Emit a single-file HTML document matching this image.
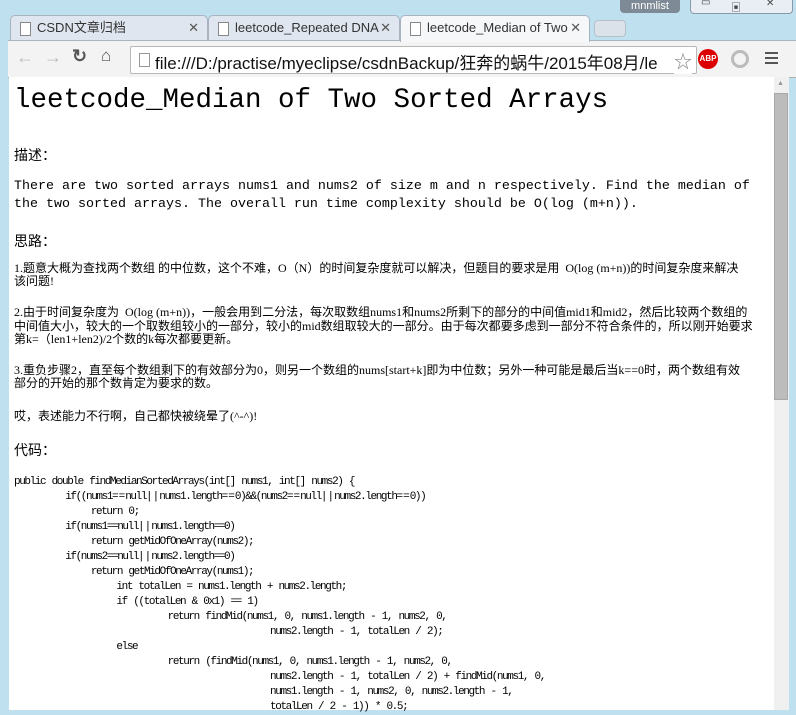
<!DOCTYPE html>
<html><head><meta charset="utf-8"><style>
body{margin:0;width:796px;height:710px;overflow:hidden;background:#bfe0ef;position:relative;font-family:"Liberation Sans","Noto Sans CJK SC",sans-serif}
.abs{position:absolute;white-space:pre}
.tab{position:absolute;top:15px;height:26px;background:#dfe6ef;border:1px solid #a9b3c0;border-bottom:none;border-radius:5px 5px 0 0;font-size:13px;color:#333;line-height:24px;padding-left:26px;box-sizing:border-box;overflow:hidden}
.tab .ic{position:absolute;left:9px;top:6px;width:9px;height:12px;border:1px solid #888;background:#fff}
.tab .x{position:absolute;right:8px;top:0;font-size:13px;color:#555}
.toolbar{position:absolute;left:8px;top:40px;width:788px;height:36px;background:#f3f3f3;border-top:1px solid #a9b3c0;border-bottom:1px solid #b0b0b0}
.content{position:absolute;left:9px;top:77px;width:765px;height:633px;background:#fff}
.mono{font-family:"Liberation Mono","Noto Sans CJK SC",monospace}
.cn{font-family:"Liberation Serif","Noto Sans CJK SC",serif;font-size:12px;color:#000}
.code{font-family:"Liberation Mono",monospace;font-size:11px;letter-spacing:-1.4px;word-spacing:1.2px;line-height:15px;color:#000}
.code i{font-style:normal;letter-spacing:0}
</style></head><body>
<div class="tab" style="left:10px;width:198px">CSDN文章归档<span class="ic"></span><span class="x">✕</span></div>
<div class="tab" style="left:208px;width:192px">leetcode_Repeated DNA<span class="ic"></span><span class="x">✕</span></div>
<div class="tab" style="left:400px;width:190px;background:#f6f7f9;height:27px;z-index:2">leetcode_Median of Two<span class="ic"></span><span class="x">✕</span></div>
<div style="position:absolute;left:594px;top:20px;width:30px;height:15px;background:#dbe2ea;border:1px solid #b6c0cc;border-radius:4px"></div>
<div style="position:absolute;left:620px;top:0;width:60px;height:13px;background:#7e8a95;border-radius:0 0 4px 4px;color:#fff;font-size:11px;text-align:center;line-height:12px">mnmlist</div>
<div style="position:absolute;left:690px;top:0;width:101px;height:13px;background:#e8eef4;border:1px solid #8a99aa;border-top:none;border-radius:0 0 4px 4px;font-size:10px;color:#444"><span style="position:absolute;left:10px;top:-3px">▭</span><span style="position:absolute;left:40px;top:-1px">▣</span><span style="position:absolute;left:75px;top:-2px">✕</span></div>
<div class="toolbar">
 <span class="abs" style="left:8px;top:6px;font-size:18px;color:#bbb">←</span>
 <span class="abs" style="left:36px;top:6px;font-size:18px;color:#bbb">→</span>
 <span class="abs" style="left:64px;top:5px;font-size:18px;color:#555;font-weight:bold">↻</span>
 <span class="abs" style="left:93px;top:5px;font-size:17px;color:#555">⌂</span>
 <div style="position:absolute;left:122px;top:5px;width:565px;height:26px;background:#fff;border:1px solid #b8b8b8;border-radius:2px">
  <div style="position:absolute;left:8px;top:6px;width:9px;height:12px;border:1px solid #999"></div>
  <span class="abs" style="left:24px;top:2px;font-size:17px;color:#111">file:///D:/practise/myeclipse/csdnBackup/狂奔的蜗牛/2015年08月/le</span>
  <span class="abs" style="left:543px;top:1px;font-size:18px;color:#888;background:#fff">☆</span>
 </div>
 <div style="position:absolute;left:690px;top:8px;width:20px;height:20px;border-radius:50%;background:#d00;color:#fff;font-size:8px;font-weight:bold;text-align:center;line-height:20px">ABP</div>
 <div style="position:absolute;left:723px;top:9px;width:12px;height:12px;border-radius:50%;border:3px solid #bbb"></div>
 <div style="position:absolute;left:757px;top:11px;width:13px;height:2px;background:#555;box-shadow:0 5px 0 #555,0 10px 0 #555"></div>
</div>
<div class="content">
 <span class="abs mono" style="left:5px;top:8px;font-size:27.5px">leetcode_Median of Two Sorted Arrays</span>
 <span class="abs cn" style="left:5px;top:68px;font-size:14px">描述：</span>
 <div class="abs mono" style="left:5px;top:101px;font-size:13.33px;line-height:18px">There are two sorted arrays nums1 and nums2 of size m and n respectively. Find the median of
the two sorted arrays. The overall run time complexity should be O(log (m+n)).</div>
 <span class="abs cn" style="left:5px;top:154px;font-size:14px">思路：</span>
 <div class="abs cn" style="left:5px;top:185px;line-height:13px">1.题意大概为查找两个数组 的中位数，这个不难，O（N）的时间复杂度就可以解决，但题目的要求是用  O(log (m+n))的时间复杂度来解决
该问题!</div>
 <div class="abs cn" style="left:5px;top:229px;line-height:13.5px">2.由于时间复杂度为  O(log (m+n))，一般会用到二分法，每次取数组nums1和nums2所剩下的部分的中间值mid1和mid2，然后比较两个数组的
中间值大小，较大的一个取数组较小的一部分，较小的mid数组取较大的一部分。由于每次都要多虑到一部分不符合条件的，所以刚开始要求
第k=（len1+len2)/2个数的k每次都要更新。</div>
 <div class="abs cn" style="left:5px;top:287px;line-height:13px">3.重负步骤2，直至每个数组剩下的有效部分为0，则另一个数组的nums[start+k]即为中位数；另外一种可能是最后当k==0时，两个数组有效
部分的开始的那个数肯定为要求的数。</div>
 <span class="abs cn" style="left:5px;top:330px">哎，表述能力不行啊，自己都快被绕晕了(^-^)!</span>
 <span class="abs cn" style="left:5px;top:363px;font-size:14px">代码：</span>
 <div class="abs code" style="left:5px;top:398px">public double findMedianSortedArrays(int[] nums1, int[] nums2) {
        if((nums1<i>==</i>null<i>||</i>nums1.length<i>==</i>0)&amp;&amp;(nums2<i>==</i>null<i>||</i>nums2.length<i>==</i>0))
            return 0;
        if(nums1==null<i>||</i>nums1.length==0)
            return getMidOfOneArray(nums2);
        if(nums2==null<i>||</i>nums2.length==0)
            return getMidOfOneArray(nums1);
                int totalLen = nums1.length + nums2.length;
                if ((totalLen &amp; 0x1) == 1)
                        return findMid(nums1, 0, nums1.length - 1, nums2, 0,
                                        nums2.length - 1, totalLen / 2);
                else
                        return (findMid(nums1, 0, nums1.length - 1, nums2, 0,
                                        nums2.length - 1, totalLen / 2) + findMid(nums1, 0,
                                        nums1.length - 1, nums2, 0, nums2.length - 1,
                                        totalLen / 2 - 1)) * 0.5;</div>
</div>
<div style="position:absolute;left:774px;top:77px;width:15px;height:633px;background:#f0f0f0"></div>
<div style="position:absolute;left:777px;top:80px;font-size:7px;color:#999">▲</div>
<div style="position:absolute;left:774px;top:93px;width:14px;height:307px;background:#bcbcbc;border:1px solid #a8a8a8;box-sizing:border-box"></div>
</body></html>
